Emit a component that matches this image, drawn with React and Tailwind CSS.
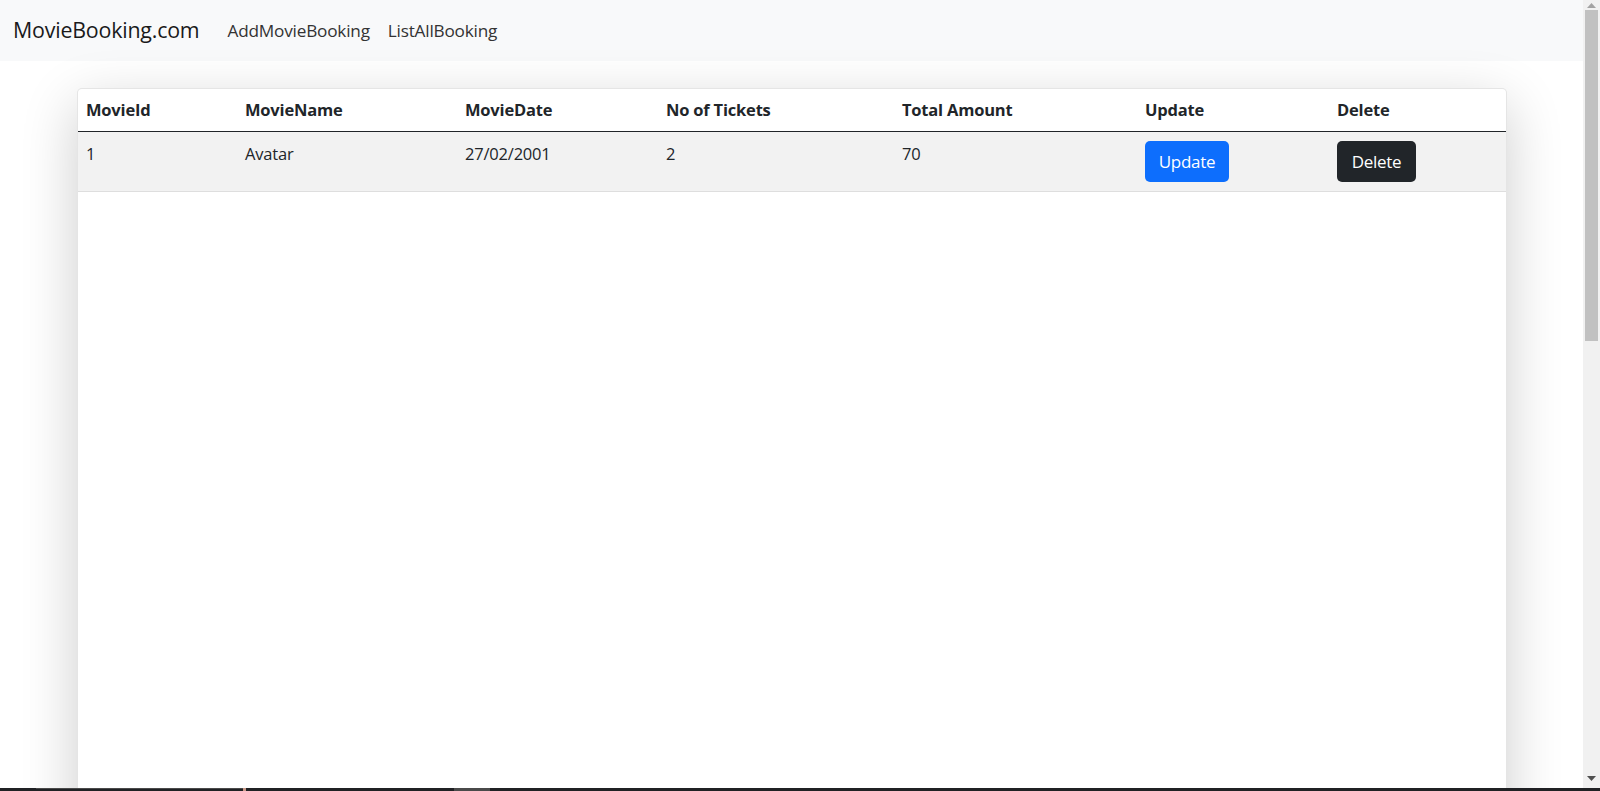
export default function App() {
  const cols = "grid grid-cols-[159px_220px_201px_236px_243px_192px_179px]";
  const headers = ["MovieId", "MovieName", "MovieDate", "No of Tickets", "Total Amount", "Update", "Delete"];
  const row = ["1", "Avatar", "27/02/2001", "2", "70"];
  return (
    <div className="flex flex-col h-[791px] w-[1600px] overflow-hidden bg-white text-[#212529]" style={{ fontFamily: '"Open Sans", "Noto Sans", sans-serif' }}>
      <div className="flex flex-1 min-h-0">
        <div className="flex-1 flex flex-col min-w-0 overflow-hidden">
          <nav className="h-[61px] shrink-0 bg-[#f8f9fa] flex items-center pl-[13px]">
            <span className="text-[21.4px] text-[#1a1a1a] tracking-[-0.2px]">MovieBooking.com</span>
            <div className="flex items-center ml-[28px] gap-[18px] text-[17.2px] text-[#333] tracking-[-0.2px]">
              <span>AddMovieBooking</span>
              <span>ListAllBooking</span>
            </div>
          </nav>
          <div className="flex-1 pt-[27px] pl-[77px]">
            <div className="w-[1430px] h-[760px] bg-white border border-black/10 rounded-[5px] shadow-[0_16px_56px_rgba(0,0,0,0.2)]">
              <div className={`${cols} h-[43px] pt-[1px] items-center border-b border-[#212529] font-bold text-[16.5px] tracking-[-0.2px]`}>
                {headers.map((h) => (
                  <div key={h} className="px-[8px]">{h}</div>
                ))}
              </div>
              <div className={`${cols} h-[60px] bg-[#f2f2f2] border-b border-[#dedede] text-[16.5px] tracking-[-0.2px]`}>
                {row.map((c, i) => (
                  <div key={i} className="px-[8px] pt-[9px] leading-[26px]">{c}</div>
                ))}
                <div className="px-[8px] pt-[9px]">
                  <button className="w-[84px] h-[41px] rounded-[5px] bg-[#0d6efd] text-white text-[17px] tracking-[-0.3px] flex items-center justify-center">Update</button>
                </div>
                <div className="px-[8px] pt-[9px]">
                  <button className="w-[79px] h-[41px] rounded-[5px] bg-[#212529] text-white text-[17px] tracking-[-0.3px] flex items-center justify-center">Delete</button>
                </div>
              </div>
            </div>
          </div>
        </div>
        <div className="w-[17px] shrink-0 bg-[#f1f1f1] flex flex-col items-center">
          <div className="h-[10px] w-full flex items-center justify-center">
            <svg width="9" height="5" viewBox="0 0 9 5"><path d="M4.5 0L9 5H0z" fill="#a3a3a3" /></svg>
          </div>
          <div className="w-[13px] h-[331px] bg-[#c1c1c1]" />
          <div className="flex-1" />
          <div className="h-[14px] w-full flex items-start justify-center pt-[2px]">
            <svg width="9" height="5" viewBox="0 0 9 5"><path d="M0 0H9L4.5 5z" fill="#505050" /></svg>
          </div>
        </div>
      </div>
      <div className="h-[3px] shrink-0 bg-[#202124] flex">
        <div className="ml-[36px] w-[207px] border-t border-[#4a4a4a]" />
        <div className="w-[3px] bg-[#c99a8a]" />
        <div className="ml-[208px] w-[36px] bg-[#4a4a4a]" />
      </div>
    </div>
  );
}
